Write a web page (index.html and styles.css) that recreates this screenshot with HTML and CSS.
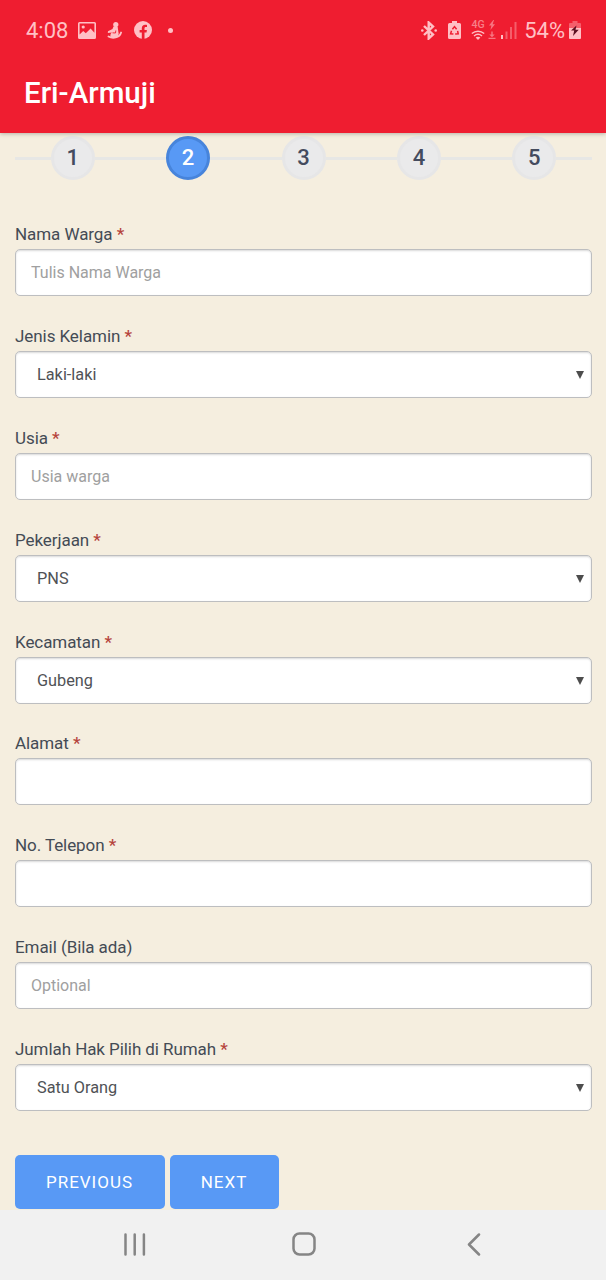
FILE: index.html
```html
<!DOCTYPE html>
<html lang="id">
<head>
  <meta charset="UTF-8">
  <meta name="viewport" content="width=device-width, initial-scale=1">
  <title>Eri-Armuji</title>
  <link rel="stylesheet" href="styles.css">
</head>
<body>

  <header class="app-header">
    <div class="status-bar">
      <span class="time">4:08</span>
      <svg class="icon-image" width="18" height="17" viewBox="0 0 18 17">
        <path fill-rule="evenodd" fill="currentColor" d="M1.5 0h15A1.5 1.5 0 0 1 18 1.5v14a1.5 1.5 0 0 1-1.5 1.5h-15A1.5 1.5 0 0 1 0 15.5v-14A1.5 1.5 0 0 1 1.5 0zM1.6 1.6v11l3.600-3.600 2.600 2.300 4.800-4.700 3.800 4.200V1.600z"/>
        <circle cx="5.200" cy="5" r="1.600" fill="currentColor"/>
      </svg>
      <svg class="icon-person" width="16" height="17" viewBox="0 0 16 17">
        <g fill="currentColor">
          <circle cx="8.800" cy="2.600" r="2.600"/>
          <path d="M6.500 4.500l4.200.5.600 4.500c1 2.500 0 5.500-2.300 6.500H4.500C2.800 14.500 3 12 4.800 10.500L.8 11 1 9.300 5.500 7z"/>
        </g>
        <path d="M1.500 14.500c4 2.200 11 1.700 12.600-4" fill="none" stroke="currentColor" stroke-width="1.800" stroke-linecap="round"/>
        <path d="M5.500 10.800l3 .2.300-2.500" fill="none" stroke="#ef1d30" stroke-width=".9"/>
      </svg>
      <svg class="icon-facebook" width="18" height="18" viewBox="0 0 18 18">
        <circle cx="9" cy="9" r="9" fill="currentColor"/>
        <path fill="#ef1d30" d="M7.800 18v-6.400H5.600V9h2.200V7.200c0-2.300 1.300-3.500 3.400-3.500.9 0 1.800.2 1.800.2v2h-1.100c-1 0-1.400.6-1.400 1.300V9h2.400l-.4 2.600h-2V18z"/>
      </svg>
      <span class="dot"></span>

      <div class="status-right">
        <svg class="icon-bluetooth" width="16" height="19" viewBox="0 0 16 19">
          <path d="M3 5l9 8.500-4.300 4V1.500L12 5.500 3 14" fill="none" stroke="currentColor" stroke-width="2.400"/>
          <circle cx="1.300" cy="9.500" r="1.300" fill="currentColor"/>
          <circle cx="14.700" cy="9.500" r="1.300" fill="currentColor"/>
        </svg>
        <svg class="icon-saver" width="13" height="18" viewBox="0 0 13 18">
          <path fill="currentColor" d="M4 0h5v2h2.500A1.500 1.500 0 0 1 13 3.500v13a1.500 1.500 0 0 1-1.500 1.500h-10A1.500 1.500 0 0 1 0 16.500v-13A1.500 1.500 0 0 1 1.500 2H4z"/>
          <path d="M4.400 8.300l2.100-2.700 2.100 2.700M9.600 9.800l.6 3-3 .2M5.400 13l-2.800-.2.900-3" fill="none" stroke="#ef1d30" stroke-width="1.500"/>
        </svg>
        <div class="network">
          <span>4G</span>
          <svg width="14" height="10" viewBox="0 0 14 10">
            <path d="M.8 3.600c3.600-3.200 8.800-3.200 12.400 0M3 6c2.400-2 5.600-2 8 0" fill="none" stroke="currentColor" stroke-width="1.400"/>
            <path d="M4.600 7.600c1.500-1.100 3.300-1.100 4.800 0L7 10z" fill="currentColor"/>
          </svg>
        </div>
        <svg class="icon-transfer" width="8" height="20" viewBox="0 0 8 20">
          <path d="M5.300 0L1 5.500h2.400L2.400 10 7 4.300H4.600L6 0zM3.300 11.500h1.400v3h2L4 17.300l-2.700-2.800h2zM.5 17.800h7v1.300h-7z" fill="currentColor"/>
        </svg>
        <svg class="icon-signal" width="16" height="17" viewBox="0 0 16 17">
          <path d="M0 13h2v4H0z" fill="currentColor"/>
          <path d="M4.500 9.500h2V17h-2zM9 5h2v12H9zM13.500 0h2v17h-2z" fill="currentColor" opacity=".4"/>
        </svg>
        <span class="percent">54%</span>
        <svg class="icon-battery" width="12" height="18" viewBox="0 0 12 18">
          <path d="M3.500 0h5v2H11a1 1 0 0 1 1 1v4H0V3a1 1 0 0 1 1-1h2.500z" fill="currentColor" opacity=".4"/>
          <path d="M0 7h12v10a1 1 0 0 1-1 1H1a1 1 0 0 1-1-1z" fill="currentColor"/>
          <path d="M7.500 4.500L2 9.500h3.200L4 15l5.700-6.200H6.500z" fill="#5a1020"/>
        </svg>
      </div>
    </div>
    <h1>Eri-Armuji</h1>
  </header>

  <main>
    <ol class="steps">
      <li><span>1</span></li>
      <li class="active"><span>2</span></li>
      <li><span>3</span></li>
      <li><span>4</span></li>
      <li><span>5</span></li>
    </ol>

    <form>
      <div class="form-group">
        <label for="nama">Nama Warga <span class="required">*</span></label>
        <input type="text" id="nama" name="nama" placeholder="Tulis Nama Warga">
      </div>

      <div class="form-group">
        <label for="kelamin">Jenis Kelamin <span class="required">*</span></label>
        <div class="select">
          <select id="kelamin" name="kelamin">
            <option>Laki-laki</option>
          </select>
        </div>
      </div>

      <div class="form-group">
        <label for="usia">Usia <span class="required">*</span></label>
        <input type="text" id="usia" name="usia" placeholder="Usia warga">
      </div>

      <div class="form-group">
        <label for="pekerjaan">Pekerjaan <span class="required">*</span></label>
        <div class="select">
          <select id="pekerjaan" name="pekerjaan">
            <option>PNS</option>
          </select>
        </div>
      </div>

      <div class="form-group">
        <label for="kecamatan">Kecamatan <span class="required">*</span></label>
        <div class="select">
          <select id="kecamatan" name="kecamatan">
            <option>Gubeng</option>
          </select>
        </div>
      </div>

      <div class="form-group">
        <label for="alamat">Alamat <span class="required">*</span></label>
        <input type="text" id="alamat" name="alamat">
      </div>

      <div class="form-group">
        <label for="telepon">No. Telepon <span class="required">*</span></label>
        <input type="text" id="telepon" name="telepon">
      </div>

      <div class="form-group">
        <label for="email">Email (Bila ada)</label>
        <input type="text" id="email" name="email" placeholder="Optional">
      </div>

      <div class="form-group">
        <label for="jumlah">Jumlah Hak Pilih di Rumah <span class="required">*</span></label>
        <div class="select">
          <select id="jumlah" name="jumlah">
            <option>Satu Orang</option>
          </select>
        </div>
      </div>

      <div class="buttons">
        <button type="button" class="previous">Previous</button>
        <button type="button" class="next">Next</button>
      </div>
    </form>
  </main>

  <nav class="nav-bar">
    <svg width="22" height="23" viewBox="0 0 22 23">
      <path d="M1.500 1.500v20M10.700 1.500v20M19.900 1.500v20"/>
    </svg>
    <svg class="home" width="24" height="24" viewBox="0 0 24 24">
      <rect x="1.500" y="1.500" width="21" height="21" rx="6"/>
    </svg>
    <svg width="14" height="23" viewBox="0 0 14 23">
      <path d="M12 1.500l-10 10 10 10"/>
    </svg>
  </nav>

</body>
</html>
```
FILE: styles.css
```css
* {
  box-sizing: border-box;
}

body {
  margin: 0;
  height: 1280px;
  display: flex;
  flex-direction: column;
  overflow: hidden;
  font-family: Roboto, sans-serif;
  background: #f5eedf;
  color: #444b55;
}

/* Header */
.app-header {
  height: 133px;
  flex: none;
  background: #ef1d30;
  color: #fff;
  box-shadow: 0 1px 4px rgba(0, 0, 0, 0.25);
  position: relative;
}

.status-bar {
  height: 60px;
  padding: 0 25px 0 26px;
  display: flex;
  align-items: center;
  color: #ffc0c5;
}

.status-bar svg {
  flex: none;
}

.time,
.percent {
  font-size: 22px;
  line-height: 26px;
  margin-top: 2px;
}

.icon-image {
  margin-left: 10px;
}

.icon-person {
  margin-left: 11px;
}

.icon-facebook {
  margin-left: 11px;
}

.dot {
  width: 5px;
  height: 5px;
  margin-left: 16px;
  border-radius: 50%;
  background: currentColor;
}

.status-right {
  margin-left: auto;
  display: flex;
  align-items: center;
}

.icon-saver {
  margin-left: 11px;
}

.network {
  width: 14px;
  margin-left: 10px;
  display: flex;
  flex-direction: column;
  align-items: center;
}

.network span {
  font-size: 10.5px;
  line-height: 10px;
  font-weight: 500;
  opacity: 0.6;
}

.icon-transfer {
  margin-left: 3px;
  opacity: 0.55;
}

.icon-signal {
  margin-left: 5px;
}

.percent {
  margin-left: 7px;
}

.icon-battery {
  margin-left: 4px;
}

h1 {
  margin: 0;
  padding: 16px 24px 0;
  font-size: 29.5px;
  line-height: 34px;
  font-weight: 500;
}

main {
  flex: 1;
  padding: 3px 14px 0 15px;
}

/* Steps */
.steps {
  list-style: none;
  margin: 0 0 42px;
  padding: 0;
  display: flex;
}

.steps li {
  flex: 1;
  display: flex;
  align-items: center;
}

.steps li::before,
.steps li::after {
  content: "";
  flex: 1;
  height: 3px;
  background: #e7e7e5;
}

.steps span {
  width: 44px;
  height: 44px;
  border: 3px solid #e6e6e7;
  border-radius: 50%;
  background: #eaeaeb;
  color: #444b5e;
  font-size: 22px;
  line-height: 37px;
  font-weight: 500;
  text-align: center;
}

.steps .active span {
  background: #5899f5;
  border-color: #4784db;
  color: #fff;
}

/* Form */
.form-group {
  height: 101.9px;
}

label {
  display: block;
  height: 27px;
  font-size: 17px;
  line-height: 25px;
  letter-spacing: -0.07px;
}

.required {
  color: #b5443c;
  font-weight: 500;
}

input,
select {
  display: block;
  width: 100%;
  height: 47px;
  padding: 0 15px;
  border: 1px solid #bdbec0;
  border-radius: 5px;
  background: #fff;
  box-shadow: inset 0 1px 2px rgba(0, 0, 0, 0.15);
  font-family: inherit;
  font-size: 16px;
  color: #505256;
  outline: none;
}

input::placeholder {
  color: #a0a0a0;
}

select {
  appearance: none;
  padding-left: 21px;
  font-size: 16.3px;
}

.select {
  position: relative;
}

.select::after {
  content: "";
  position: absolute;
  right: 8px;
  top: 20px;
  border: 4.5px solid transparent;
  border-top: 8px solid #4d4d4d;
  border-bottom: 0;
  pointer-events: none;
}

.buttons {
  display: flex;
  gap: 5px;
  margin-top: 15.5px;
}

button {
  height: 54px;
  padding: 0 1px 0 0;
  border: none;
  border-radius: 5px;
  background: #5899f5;
  color: #fff;
  font-family: inherit;
  font-size: 17px;
  letter-spacing: 1px;
  text-transform: uppercase;
}

.previous {
  width: 150px;
}

.next {
  width: 109px;
}

/* Navigation bar */
.nav-bar {
  height: 70px;
  flex: none;
  padding: 0 125px 2px 124px;
  display: flex;
  align-items: center;
  justify-content: space-between;
  background: #f1f1f1;
}

.nav-bar svg {
  fill: none;
  stroke: #858585;
  stroke-width: 2.5;
  stroke-linecap: round;
  stroke-linejoin: round;
}

.nav-bar .home {
  margin-right: 5px;
}
```
